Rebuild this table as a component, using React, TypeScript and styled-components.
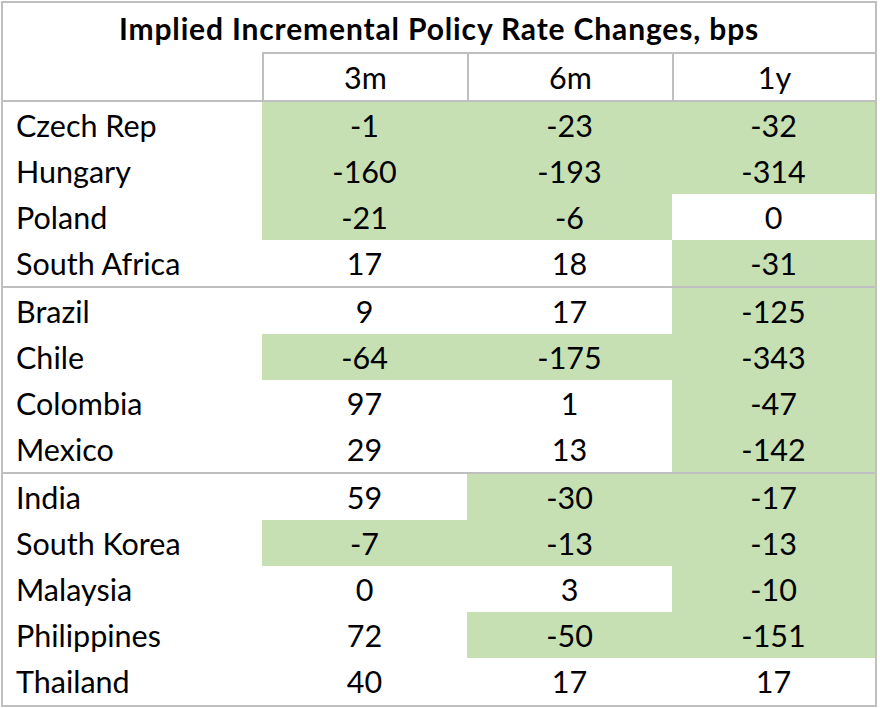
import styled, { createGlobalStyle } from 'styled-components';

const GlobalStyle = createGlobalStyle`
    html, body {
        margin: 0;
        padding: 0;
        background: #ffffff;
    }
    body {
        font-family: Lato, "Open Sans", sans-serif;
        color: #000000;
    }
`;

type RateRow = {
    country: string;
    values: [number, number, number];
};

// grouped as in the sheet: CEEMEA, LatAm, Asia
const groups: RateRow[][] = [
    [
        { country: 'Czech Rep', values: [-1, -23, -32] },
        { country: 'Hungary', values: [-160, -193, -314] },
        { country: 'Poland', values: [-21, -6, 0] },
        { country: 'South Africa', values: [17, 18, -31] },
    ],
    [
        { country: 'Brazil', values: [9, 17, -125] },
        { country: 'Chile', values: [-64, -175, -343] },
        { country: 'Colombia', values: [97, 1, -47] },
        { country: 'Mexico', values: [29, 13, -142] },
    ],
    [
        { country: 'India', values: [59, -30, -17] },
        { country: 'South Korea', values: [-7, -13, -13] },
        { country: 'Malaysia', values: [0, 3, -10] },
        { country: 'Philippines', values: [72, -50, -151] },
        { country: 'Thailand', values: [40, 17, 17] },
    ],
];

const horizons = ['3m', '6m', '1y'];

const App = () => {
    return (
        <>
            <GlobalStyle />
            <Sheet>
                <Title>Implied Incremental Policy Rate Changes, bps</Title>
                <HeaderRow>
                    <HeaderCell $blank />
                    {horizons.map((h) => (
                        <HeaderCell key={h}>{h}</HeaderCell>
                    ))}
                </HeaderRow>
                {groups.map((group, gi) =>
                    group.map((row, ri) => (
                        <Row key={row.country} $groupStart={gi > 0 && ri === 0}>
                            <Label>{row.country}</Label>
                            {row.values.map((v, i) => (
                                <Value key={i} $cut={v < 0}>
                                    {v}
                                </Value>
                            ))}
                        </Row>
                    ))
                )}
            </Sheet>
        </>
    );
};

export default App;

const Sheet = styled.div`
    width: 876px;
    margin: 1px 0 0 1px;
    border: 2px solid #bfbfbf;
    box-sizing: border-box;
    height: 706px;
    display: flex;
    flex-direction: column;
    font-size: 30.5px;
`;

const Title = styled.div`
    height: 49px;
    flex-shrink: 0;
    display: flex;
    align-items: center;
    justify-content: center;
    font-weight: 700;
    font-size: 30px;
    letter-spacing: 0.85px;
`;

const Grid = styled.div`
    display: grid;
    grid-template-columns: 259px 205px 205px 1fr;
    flex-shrink: 0;
`;

const HeaderRow = styled(Grid)`
    height: 48px;
    border-bottom: 2px solid #bfbfbf;
`;

const HeaderCell = styled.div<{ $blank?: boolean }>`
    display: flex;
    align-items: center;
    justify-content: center;
    border-top: ${(p) => (p.$blank ? 'none' : '2px solid #bfbfbf')};
    border-left: ${(p) => (p.$blank ? 'none' : '2px solid #bfbfbf')};
`;

const Row = styled(Grid)<{ $groupStart?: boolean }>`
    height: 46px;
    border-top: ${(p) => (p.$groupStart ? '2px solid #bfbfbf' : 'none')};
`;

const Label = styled.div`
    display: flex;
    align-items: center;
    padding-left: 13px;
`;

const Value = styled.div<{ $cut: boolean }>`
    display: flex;
    align-items: center;
    justify-content: center;
    background: ${(p) => (p.$cut ? '#c6e0b4' : '#ffffff')};
`;
